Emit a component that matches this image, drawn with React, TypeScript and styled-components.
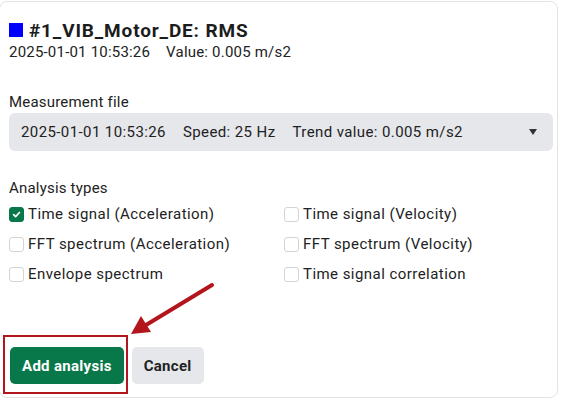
import { useState } from 'react';
import styled, { createGlobalStyle } from 'styled-components';

const Global = createGlobalStyle`
  html, body { margin: 0; padding: 0; background: #ffffff; }
  body { font-family: Roboto, "Liberation Sans", sans-serif; color: #222; }
  * { box-sizing: border-box; }
`;

const Page = styled.div`
  position: relative;
  width: 562px;
  height: 401px;
  overflow: hidden;
  background: #fff;
`;

const Card = styled.div`
  margin: 1px 0 0 -1px;
  width: 559px;
  height: 397px;
  border: 1px solid #e3e3e3;
  border-radius: 8px;
  padding: 16px 0 0 9px;
  display: flex;
  flex-direction: column;
`;

const TitleRow = styled.div`
  display: flex;
  align-items: center;
  gap: 6px;
  height: 24px;
`;

const Swatch = styled.span<{ $color: string }>`
  width: 14px;
  height: 14px;
  background: ${(p) => p.$color};
  flex: none;
`;

const Title = styled.h2`
  margin: 0;
  font-size: 19px;
  font-weight: 700;
  color: #1c1c1c;
  letter-spacing: 0.85px;
`;

const Meta = styled.div`
  display: flex;
  gap: 16px;
  font-size: 15px;
  letter-spacing: 0.2px;
  margin-top: 1px;
  color: #222;
`;

const Section = styled.div<{ $top: number }>`
  margin-top: ${(p) => p.$top}px;
  display: flex;
  flex-direction: column;
`;

const Label = styled.div`
  font-size: 15px;
  letter-spacing: 0.2px;
  color: #222;
  height: 20px;
  line-height: 20px;
`;

const Select = styled.div`
  margin-top: 1px;
  width: 544px;
  height: 38px;
  background: #e5e7eb;
  border-radius: 6px;
  display: flex;
  align-items: center;
  padding: 0 16px 0 12px;
  font-size: 15px;
  letter-spacing: 0.4px;
  color: #222;
`;

const SelectText = styled.div`
  flex: 1;
  display: flex;
  gap: 17px;
`;

const Caret = styled.span`
  width: 0;
  height: 0;
  border-left: 4px solid transparent;
  border-right: 4px solid transparent;
  border-top: 6px solid #333;
`;

const Grid = styled.div`
  display: grid;
  grid-template-columns: 275px 260px;
  grid-auto-rows: 30px;
  margin-top: 1px;
`;

const Option = styled.label`
  display: flex;
  align-items: center;
  gap: 4px;
  font-size: 15px;
  letter-spacing: 0.45px;
  color: #222;
  cursor: pointer;
`;

const Box = styled.span<{ $checked: boolean }>`
  width: 15px;
  height: 15px;
  border-radius: 3px;
  flex: none;
  border: 1px solid ${(p) => (p.$checked ? '#08784a' : '#d4d4d4')};
  background: ${(p) => (p.$checked ? '#08784a' : '#fff')};
  display: flex;
  align-items: center;
  justify-content: center;
`;

const Actions = styled.div`
  margin-top: auto;
  margin-bottom: 13px;
  padding-left: 1px;
  display: flex;
  gap: 8px;
`;

const Button = styled.button<{ $primary?: boolean }>`
  height: 37px;
  border: none;
  border-radius: 5px;
  padding: 0 12px;
  font-family: inherit;
  font-size: 15px;
  letter-spacing: 0.3px;
  font-weight: 700;
  background: ${(p) => (p.$primary ? '#08784a' : '#e5e7eb')};
  color: ${(p) => (p.$primary ? '#fff' : '#222')};
  cursor: pointer;
`;

const Highlight = styled.div`
  position: absolute;
  left: 3px;
  top: 335px;
  width: 125px;
  height: 59px;
  border: 2.5px solid #b3151c;
  pointer-events: none;
`;

const Arrow = styled.svg`
  position: absolute;
  left: 0;
  top: 0;
  pointer-events: none;
`;

const options = [
  'Time signal (Acceleration)',
  'Time signal (Velocity)',
  'FFT spectrum (Acceleration)',
  'FFT spectrum (Velocity)',
  'Envelope spectrum',
  'Time signal correlation',
];

export default function App() {
  const [checked, setChecked] = useState<string[]>(['Time signal (Acceleration)']);
  const toggle = (o: string) =>
    setChecked((c) => (c.includes(o) ? c.filter((x) => x !== o) : [...c, o]));

  return (
    <Page>
      <Global />
      <Card>
        <TitleRow>
          <Swatch $color="#0000ff" />
          <Title>#1_VIB_Motor_DE: RMS</Title>
        </TitleRow>
        <Meta>
          <span>2025-01-01 10:53:26</span>
          <span>Value: 0.005 m/s2</span>
        </Meta>

        <Section $top={31}>
          <Label>Measurement file</Label>
          <Select>
            <SelectText>
              <span>2025-01-01 10:53:26</span>
              <span>Speed: 25 Hz</span>
              <span>Trend value: 0.005 m/s2</span>
            </SelectText>
            <Caret />
          </Select>
        </Section>

        <Section $top={27}>
          <Label>Analysis types</Label>
          <Grid>
            {options.map((o) => {
              const on = checked.includes(o);
              return (
                <Option key={o} onClick={() => toggle(o)}>
                  <Box $checked={on}>
                    {on && (
                      <svg width="9" height="9" viewBox="0 0 10 10">
                        <path d="M1.8 5.2 L4 7.3 L8.3 2.8" stroke="#fff" strokeWidth="1.9" fill="none" strokeLinecap="round" strokeLinejoin="round" />
                      </svg>
                    )}
                  </Box>
                  {o}
                </Option>
              );
            })}
          </Grid>
        </Section>

        <Actions>
          <Button $primary>Add analysis</Button>
          <Button>Cancel</Button>
        </Actions>
      </Card>

      <Highlight />
      <Arrow width="562" height="401" viewBox="0 0 562 401">
        <line x1="212" y1="285" x2="146" y2="325" stroke="#b3151c" strokeWidth="4" strokeLinecap="round" />
        <polygon points="131,334 141,316 151,332" fill="#b3151c" />
      </Arrow>
    </Page>
  );
}
